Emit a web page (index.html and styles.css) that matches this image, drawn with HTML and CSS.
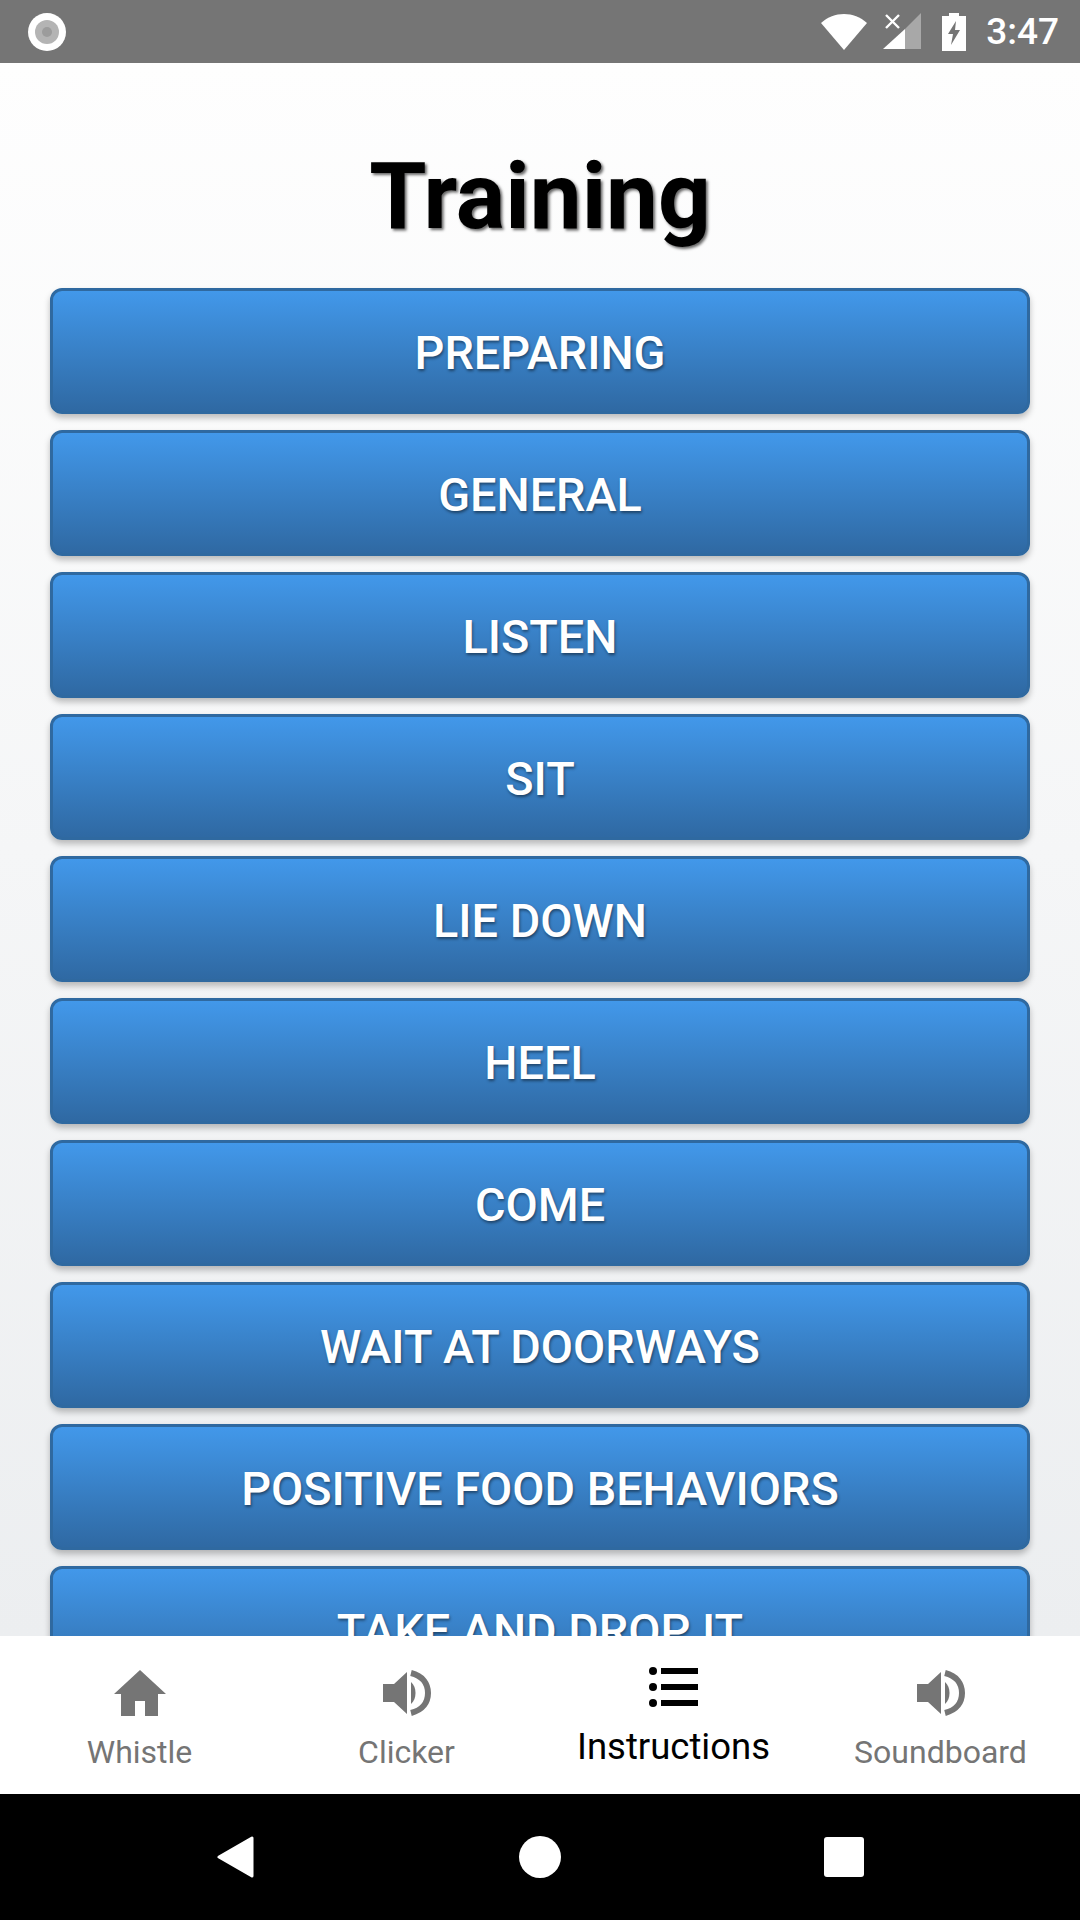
FILE: index.html
```html
<!DOCTYPE html>
<html lang="en">
<head>
    <meta charset="UTF-8">
    <meta name="viewport" content="width=device-width, initial-scale=1.0">
    <title>Training</title>
    <link rel="stylesheet" href="styles.css">
</head>
<body>
    <!-- Status bar -->
    <div class="status-bar">
        <svg class="record-icon" width="38" height="38" viewBox="0 0 38 38">
            <circle cx="19" cy="19" r="19" fill="#fff"/>
            <circle cx="19" cy="19" r="12" fill="#b4b4b4"/>
            <circle cx="19" cy="19" r="5" fill="#9c9c9c"/>
        </svg>
        <div class="status-right">
            <svg class="wifi-icon" width="46" height="36" viewBox="0 0 46 36">
                <path d="M0 9 C13 -3 33 -3 46 9 L23 36 Z" fill="#fff"/>
            </svg>
            <svg class="signal-icon" width="38" height="38" viewBox="0 0 38 38">
                <path d="M38 0 V36 H22 V16 Z" fill="#a8a8a8"/>
                <path d="M22 16 V36 H0 Z" fill="#fff"/>
                <path d="M3 2 L16 15 M16 2 L3 15" stroke="#fff" stroke-width="2.4" fill="none"/>
            </svg>
            <svg class="battery-icon" width="24" height="38" viewBox="0 0 24 38">
                <path d="M7 0 H17 V3 H24 V38 H0 V3 H7 Z" fill="#fff"/>
                <path d="M14 8 L6 21 H11 L9 32 L18 17 H13 Z" fill="#757575"/>
            </svg>
            <span class="status-time">3:47</span>
        </div>
    </div>

    <!-- Main content -->
    <div class="content">
        <h1 class="page-title">Training</h1>
        <div class="button-list">
            <div class="topic-button">PREPARING</div>
            <div class="topic-button">GENERAL</div>
            <div class="topic-button">LISTEN</div>
            <div class="topic-button">SIT</div>
            <div class="topic-button">LIE DOWN</div>
            <div class="topic-button">HEEL</div>
            <div class="topic-button">COME</div>
            <div class="topic-button">WAIT AT DOORWAYS</div>
            <div class="topic-button">POSITIVE FOOD BEHAVIORS</div>
            <div class="topic-button">TAKE AND DROP IT</div>
        </div>
    </div>

    <!-- Tab bar -->
    <div class="tab-bar">
        <div class="tab">
            <svg class="tab-icon" width="52" height="46" viewBox="0 0 52 46">
                <path d="M26 0 L52 24 H44 V46 H31 V31 H21 V46 H7 V24 H0 Z" fill="#757575"/>
            </svg>
            <span class="tab-label">Whistle</span>
        </div>
        <div class="tab">
            <svg class="tab-icon" width="48" height="46" viewBox="0 0 48 46">
                <path d="M0 14 H11 L24 2 V44 L11 32 H0 Z" fill="#757575"/>
                <path d="M28 12 C34 17 34 29 28 34 Z" fill="#757575"/>
                <path d="M28 3 C40 6 45 14 45 23 C45 32 40 40 28 43" fill="none" stroke="#757575" stroke-width="6"/>
            </svg>
            <span class="tab-label">Clicker</span>
        </div>
        <div class="tab tab-active">
            <svg class="tab-icon" width="49" height="40" viewBox="0 0 49 40">
                <circle cx="4" cy="4" r="4" fill="#000"/>
                <circle cx="4" cy="20" r="4" fill="#000"/>
                <circle cx="4" cy="36" r="4" fill="#000"/>
                <rect x="12" y="1" width="37" height="6" fill="#000"/>
                <rect x="12" y="17" width="37" height="6" fill="#000"/>
                <rect x="12" y="33" width="37" height="6" fill="#000"/>
            </svg>
            <span class="tab-label">Instructions</span>
        </div>
        <div class="tab">
            <svg class="tab-icon" width="48" height="46" viewBox="0 0 48 46">
                <path d="M0 14 H11 L24 2 V44 L11 32 H0 Z" fill="#757575"/>
                <path d="M28 12 C34 17 34 29 28 34 Z" fill="#757575"/>
                <path d="M28 3 C40 6 45 14 45 23 C45 32 40 40 28 43" fill="none" stroke="#757575" stroke-width="6"/>
            </svg>
            <span class="tab-label">Soundboard</span>
        </div>
    </div>

    <!-- Android navigation -->
    <div class="nav-bar">
        <svg width="38" height="42" viewBox="0 0 38 42">
            <path d="M35 2 V40 L2 21 Z" fill="#fff" stroke="#fff" stroke-width="3" stroke-linejoin="round"/>
        </svg>
        <div class="nav-home"></div>
        <div class="nav-recent"></div>
    </div>
</body>
</html>
```

FILE: styles.css
```css
* {
    margin: 0;
    padding: 0;
    box-sizing: border-box;
}

body {
    font-family: Roboto, sans-serif;
    width: 1080px;
    height: 1920px;
    display: flex;
    flex-direction: column;
    overflow: hidden;
    background: #fff;
}

/* Status bar */
.status-bar {
    height: 63px;
    flex-shrink: 0;
    background: #757575;
    display: flex;
    align-items: center;
    justify-content: space-between;
    padding: 0 21px 0 28px;
}
.status-right {
    display: flex;
    align-items: center;
}
.wifi-icon {
    margin-right: 16px;
}
.signal-icon {
    margin-right: 21px;
}
.battery-icon {
    margin-right: 20px;
}
.status-time {
    color: #fff;
    font-size: 37px;
    font-weight: 500;
}

/* Main content */
.content {
    flex: 1;
    min-height: 0;
    overflow: hidden;
    background: linear-gradient(180deg, #fefefe 0%, #eceef0 100%);
    padding: 0 50px;
}
.page-title {
    font-size: 92.5px;
    font-weight: 700;
    color: #000;
    text-align: center;
    text-shadow: 2px 2px 3px rgba(0, 0, 0, 0.6);
    height: 225px;
    line-height: 1;
    display: flex;
    align-items: center;
    justify-content: center;
    padding-top: 44px;
}
.button-list {
    display: flex;
    flex-direction: column;
    gap: 16px;
}
.topic-button {
    height: 126px;
    flex-shrink: 0;
    display: flex;
    align-items: center;
    justify-content: center;
    border: 3px solid #2f69a0;
    border-radius: 12px;
    background: linear-gradient(180deg, #4298ea 0%, #2f69a3 100%);
    box-shadow: 0 4px 6px rgba(0, 0, 0, 0.25);
    color: #fff;
    font-size: 46.8px;
    font-weight: 500;
    padding-top: 3px;
    text-shadow: 1px 2px 3px rgba(0, 0, 0, 0.45);
}

/* Tab bar */
.tab-bar {
    height: 158px;
    flex-shrink: 0;
    background: #fff;
    display: flex;
    padding: 0 6px;
}
.tab {
    flex: 1;
    display: flex;
    flex-direction: column;
    align-items: center;
    padding-top: 34px;
}
.tab-icon {
    flex-shrink: 0;
}
.tab-label {
    color: #757575;
    font-size: 32px;
    line-height: 38px;
    margin-top: 17px;
}
.tab-active {
    padding-top: 31px;
}
.tab-active .tab-label {
    color: #000;
    font-size: 36.5px;
    line-height: 42px;
    margin-top: 19px;
}

/* Android navigation */
.nav-bar {
    height: 126px;
    flex-shrink: 0;
    background: #000;
    display: flex;
    align-items: center;
    justify-content: space-between;
    padding: 0 216px 0 217px;
}
.nav-home {
    width: 42px;
    height: 42px;
    border-radius: 50%;
    background: #fff;
}
.nav-recent {
    width: 40px;
    height: 40px;
    border-radius: 3px;
    background: #fff;
}
```
